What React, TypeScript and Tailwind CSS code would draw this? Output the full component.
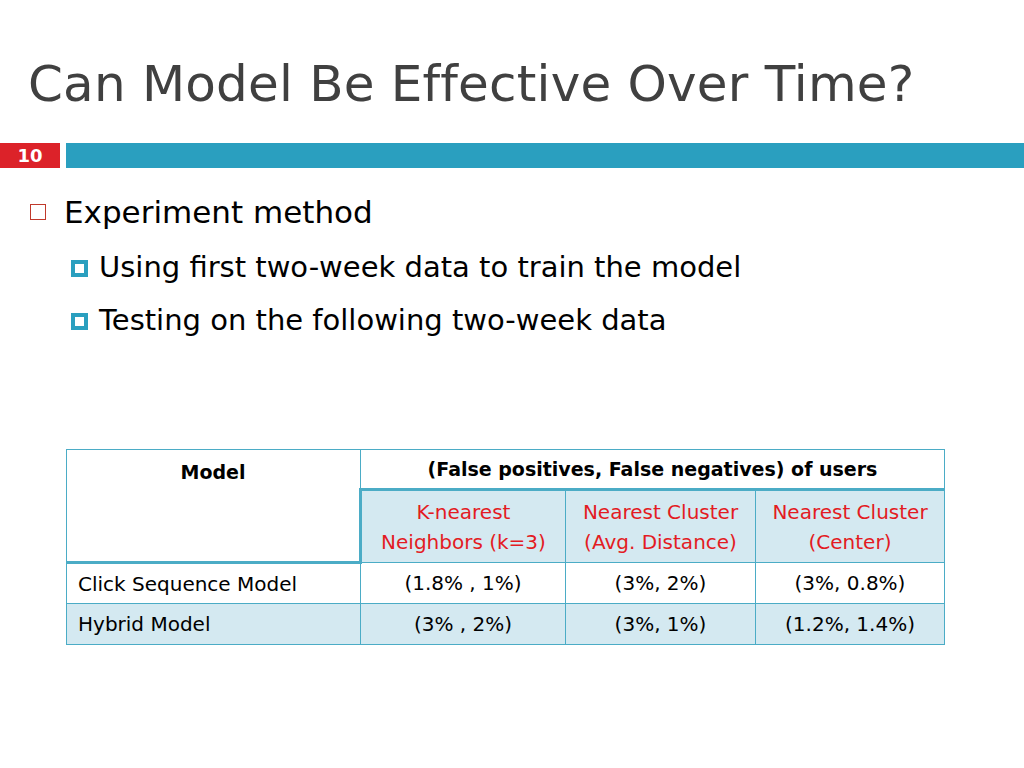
import React from 'react';

const font = { fontFamily: '"DejaVu Sans", "Liberation Sans", sans-serif' };

const SubBullet = () => (
  <span className="inline-block w-[17px] h-[17px] bg-[#2a9fbf] p-[4px] mr-[11px] shrink-0">
    <span className="block w-full h-full bg-white" />
  </span>
);

const App = () => {
  return (
    <div className="w-[1024px] h-[768px] bg-white overflow-hidden" style={font}>
      <h1 className="pl-[28px] pt-[52px] h-[143px] text-[50px] leading-[64px] text-[#404040] tracking-[0.2px]">
        Can Model Be Effective Over Time?
      </h1>

      <div className="flex h-[25px] gap-[6px]">
        <div className="w-[60px] bg-[#dc2229] flex items-center justify-center text-white font-bold text-[18px]">
          10
        </div>
        <div className="flex-1 bg-[#2a9fbf]" />
      </div>

      <div className="pl-[30px] pt-[24px]">
        <div className="flex items-center h-[40px]">
          <span className="inline-block w-[16px] h-[16px] border border-[#c0392b] mr-[18px]" />
          <span className="text-[31px] text-black">Experiment method</span>
        </div>
        <div className="pl-[41px] mt-[17px] flex flex-col gap-[15px]">
          <div className="flex items-center h-[38px]">
            <SubBullet />
            <span className="text-[29px] text-black">Using first two-week data to train the model</span>
          </div>
          <div className="flex items-center h-[38px]">
            <SubBullet />
            <span className="text-[29px] text-black">Testing on the following two-week data</span>
          </div>
        </div>
      </div>

      <div className="pl-[66px] pt-[109px]">
        <table className="border-collapse text-[20px] text-black table-fixed">
          <colgroup>
            <col className="w-[294px]" />
            <col className="w-[205px]" />
            <col className="w-[190px]" />
            <col className="w-[189px]" />
          </colgroup>
          <tbody>
            <tr className="h-[40px]">
              <td rowSpan={2} className="border border-[#4bacc6] border-b-[3px] align-top text-center font-bold pt-[8px] text-[19px]">
                Model
              </td>
              <td colSpan={3} className="border border-[#4bacc6] text-center font-bold text-[19px]">
                (False positives, False negatives) of users
              </td>
            </tr>
            <tr className="h-[73px] bg-[#d4e9f1] text-[#e31b23] leading-[30px]">
              <td className="border border-[#4bacc6] border-t-[3px] border-l-[3px] text-center">
                K-nearest<br />Neighbors (k=3)
              </td>
              <td className="border border-[#4bacc6] border-t-[3px] text-center">
                Nearest Cluster<br />(Avg. Distance)
              </td>
              <td className="border border-[#4bacc6] border-t-[3px] text-center">
                Nearest Cluster<br />(Center)
              </td>
            </tr>
            <tr className="h-[41px]">
              <td className="border border-[#4bacc6] pl-[11px]">Click Sequence Model</td>
              <td className="border border-[#4bacc6] text-center">(1.8% , 1%)</td>
              <td className="border border-[#4bacc6] text-center">(3%, 2%)</td>
              <td className="border border-[#4bacc6] text-center">(3%, 0.8%)</td>
            </tr>
            <tr className="h-[41px] bg-[#d4e9f1]">
              <td className="border border-[#4bacc6] pl-[11px]">Hybrid Model</td>
              <td className="border border-[#4bacc6] text-center">(3% , 2%)</td>
              <td className="border border-[#4bacc6] text-center">(3%, 1%)</td>
              <td className="border border-[#4bacc6] text-center">(1.2%, 1.4%)</td>
            </tr>
          </tbody>
        </table>
      </div>
    </div>
  );
};

export default App;
